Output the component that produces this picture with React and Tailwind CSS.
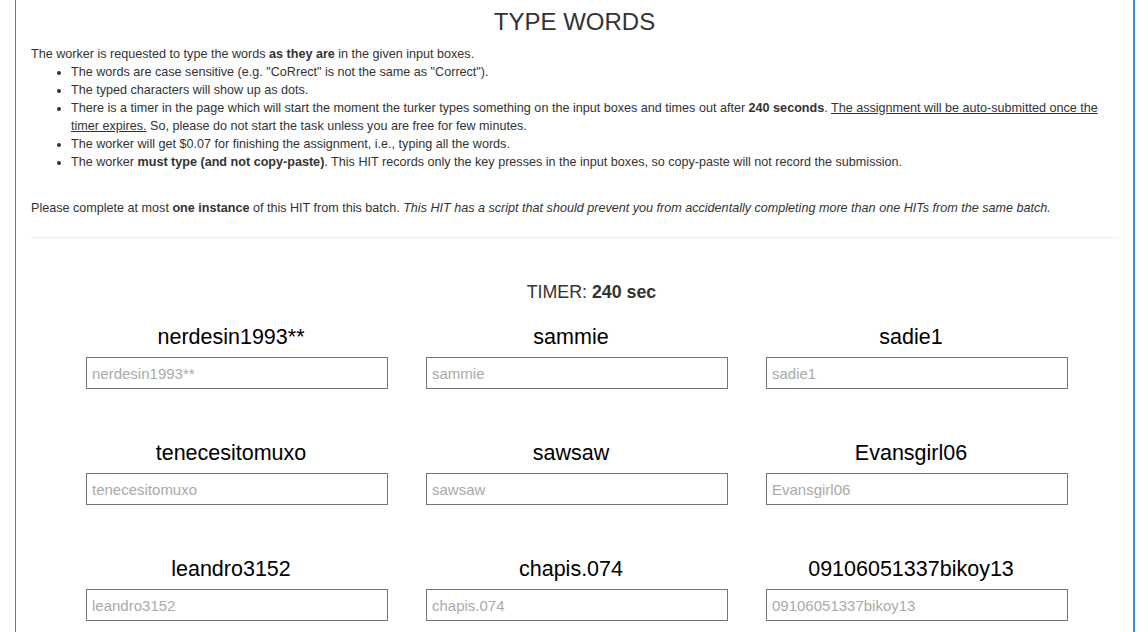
import React from "react";

const words = [
  "nerdesin1993**",
  "sammie",
  "sadie1",
  "tenecesitomuxo",
  "sawsaw",
  "Evansgirl06",
  "leandro3152",
  "chapis.074",
  "09106051337bikoy13",
];

export default function App() {
  return (
    <div
      className="w-[1148px] h-[632px] overflow-hidden bg-white"
      style={{ fontFamily: '"Liberation Sans", Arial, sans-serif' }}
    >
      <div className="ml-[15px] w-[1120px] h-[632px] border-l border-l-[#4a82bf] border-r-2 border-r-[#3a8ee6] px-[15px] text-[#333]">
        <h1 className="pt-[9px] text-center text-[24px] leading-[26px] font-normal text-[#333]">
          TYPE WORDS
        </h1>
        <div className="mt-[10px] text-[12.6px] leading-[18px]">
          <p>
            The worker is requested to type the words <b>as they are</b> in the given input boxes.
          </p>
          <ul className="list-disc pl-[40px]">
            <li>The words are case sensitive (e.g. "CoRrect" is not the same as "Correct").</li>
            <li>The typed characters will show up as dots.</li>
            <li>
              There is a timer in the page which will start the moment the turker types something on the input boxes and times out after{" "}
              <b>240 seconds</b>. <u>The assignment will be auto-submitted once the timer expires.</u> So, please do not start the task unless you are free for few minutes.
            </li>
            <li>The worker will get $0.07 for finishing the assignment, i.e., typing all the words.</li>
            <li>
              The worker <b>must type (and not copy-paste)</b>. This HIT records only the key presses in the input boxes, so copy-paste will not record the submission.
            </li>
          </ul>
          <p className="mt-[28px]">
            Please complete at most <b>one instance</b> of this HIT from this batch.{" "}
            <i>This HIT has a script that should prevent you from accidentally completing more than one HITs from the same batch.</i>
          </p>
        </div>
        <hr className="mt-[20px] border-0 border-t border-t-[#eeeeee]" />
        <div className="mt-[42px] pl-[34px] text-center text-[17.8px] leading-[24px] text-[#333]">
          TIMER: <b>240 sec</b>
        </div>
        <div className="ml-[36px] mt-[20px] grid w-[1020px] grid-cols-[340px_340px_340px] gap-y-[51px]">
          {words.map((w) => (
            <div key={w} className="flex flex-col">
              <div className="pr-[12px] text-center text-[21.5px] leading-[26px] text-black">{w}</div>
              <input
                readOnly
                placeholder={w}
                className="ml-[19px] mt-[7px] h-[32px] w-[302px] border border-[#767676] bg-white px-[5px] text-[15px] text-black outline-none placeholder:text-[#aaaaaa]"
                style={{ fontFamily: '"Liberation Sans", Arial, sans-serif' }}
              />
            </div>
          ))}
        </div>
      </div>
    </div>
  );
}
